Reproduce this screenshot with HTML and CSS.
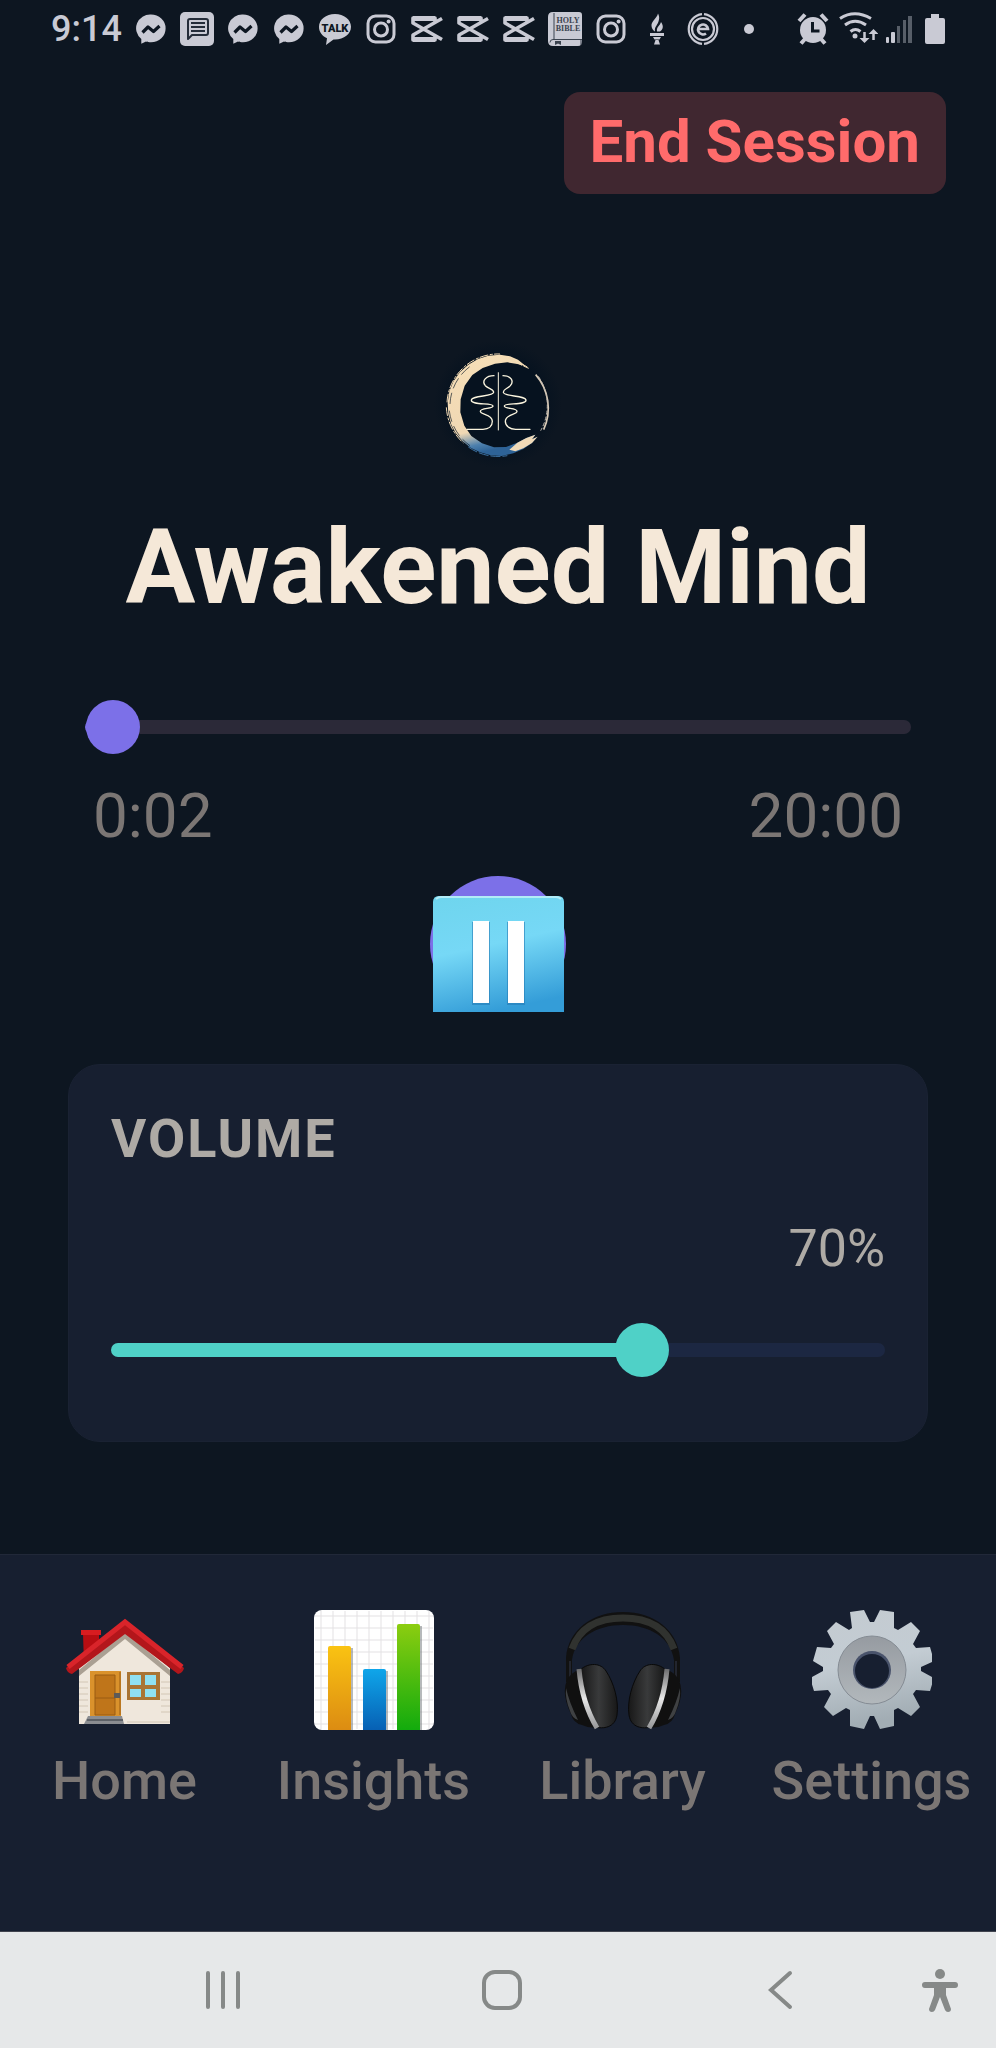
FILE: index.html
```html
<!DOCTYPE html>
<html lang="en">
  <head>
    <meta charset="UTF-8" />
    <meta name="viewport" content="width=device-width, initial-scale=1.0" />
    <title>Awakened Mind</title>
    <link rel="stylesheet" href="styles.css">
  </head>
  <body>
    <!-- shared icons -->
    <svg class="sprite" aria-hidden="true">
      <symbol id="messenger" viewBox="0 0 34 34">
        <path fill="currentColor" d="M17 2.500a14.500 13.800 0 0 1 0 27.800c-2 0-3.500-.2-5-.8L7.300 31.700V27A14 13.800 0 0 1 17 2.500z" />
        <path fill="none" stroke="#0d1621" stroke-width="3.200" stroke-linejoin="round" d="M8.500 20.500l5.500-5.500 5.500 4.500 6-5.500" />
      </symbol>
      <symbol id="instagram" viewBox="0 0 34 34">
        <rect x="4" y="4" width="26" height="26" rx="7.500" fill="none" stroke="currentColor" stroke-width="3" />
        <circle cx="17" cy="17.500" r="6.500" fill="none" stroke="currentColor" stroke-width="3" />
        <circle cx="24.600" cy="9.600" r="2" fill="currentColor" />
      </symbol>
      <symbol id="capcut" viewBox="0 0 34 34">
        <path fill="none" stroke="currentColor" stroke-width="3.600" stroke-linejoin="round" d="M25 9.500V6H3v5l29 16.500M25 24.500V28H3v-5L32 6.500" />
        <path fill="none" stroke="currentColor" stroke-width="5" d="M3 6.500h22M3 27.500h22" />
      </symbol>
    </svg>

    <div class="status-bar">
      <span class="status-time">9:14</span>
      <div class="status-icons">
        <svg class="status-icon"><use href="#messenger" /></svg>
        <svg class="status-icon" viewBox="0 0 34 34">
          <rect width="34" height="34" rx="5" fill="currentColor" />
          <path fill="none" stroke="#242c39" stroke-width="2" stroke-linejoin="round" d="M8 27V9q0-2 2-2h16q2 0 2 2v12q0 2-2 2H12z" />
          <path stroke="#242c39" stroke-width="2" d="M11 11h14M11 15h14M11 19h14" />
        </svg>
        <svg class="status-icon"><use href="#messenger" /></svg>
        <svg class="status-icon"><use href="#messenger" /></svg>
        <svg class="status-icon" viewBox="0 0 34 34">
          <path fill="currentColor" d="M17 2c9 0 16 5.500 16 12.800S26 27.500 17 27.500h-1.500L8 33l1-6.800C4 24 1 20 1 14.800 1 7.500 8 2 17 2z" />
          <text class="talk-text" x="17" y="19.500">TALK</text>
        </svg>
        <svg class="status-icon"><use href="#instagram" /></svg>
        <svg class="status-icon"><use href="#capcut" /></svg>
        <svg class="status-icon"><use href="#capcut" /></svg>
        <svg class="status-icon"><use href="#capcut" /></svg>
        <svg class="status-icon" viewBox="0 0 34 34">
          <path fill="currentColor" d="M5 0h26q3 0 3 3v26q0 5-4 5H5q-5 0-5-5V5q0-5 5-5z" />
          <path fill="none" stroke="#3b434f" stroke-width="1" d="M6 1v26M34 27.500H5q-3 0-3 3M33 28v5" />
          <path fill="#3b434f" d="M7 29h6v4l-3-1.500L7 33z" />
          <text class="bible-text" x="20" y="11">HOLY</text>
          <text class="bible-text" x="20" y="19">BIBLE</text>
        </svg>
        <svg class="status-icon"><use href="#instagram" /></svg>
        <svg class="status-icon" viewBox="0 0 34 34" fill="currentColor">
          <path d="M18 1.500c-1 5-7 7.500-6.500 12.500.3 3 2 4.500 3.500 5.500-1-5 3-6 4-12 .5-2 0-4-1-6z" />
          <path d="M21 10c-1 4-5 5-4 9.500h3c3-2 4-5.500 1-9.500zM10 21h14v3H10zM13 25h8l-1.500 2.500h-5zM15.500 28h3l1.500 4.500h-6z" />
        </svg>
        <svg class="status-icon" viewBox="0 0 34 34" fill="none" stroke="currentColor">
          <path stroke-width="2.200" d="M18 2.100a15 15 0 0 1 0 29.800M16 2.100a15 15 0 0 0 0 29.800" />
          <circle cx="17" cy="17" r="11" stroke-width="2.200" />
          <path stroke-width="2.600" d="M12 17h10a5 5 0 1 0-2 4.500" />
        </svg>
        <svg class="status-icon" viewBox="0 0 34 34"><circle cx="17" cy="17" r="5" fill="currentColor" /></svg>
      </div>
      <div class="status-system">
        <svg class="status-icon" viewBox="0 0 34 34">
          <circle cx="17" cy="18" r="13" fill="currentColor" />
          <path fill="none" stroke="currentColor" stroke-width="4" d="M3 9l6-6.500M31 9l-6-6.500M9 27l-4 4.500M25 27l4 4.500" />
          <path fill="none" stroke="#0d1621" stroke-width="3" d="M16.500 10v9h7" />
        </svg>
        <svg class="wifi-icon" viewBox="0 0 40 34" fill="none" stroke="currentColor">
          <path stroke-width="3" d="M2 6.500q14.500-9.500 31 0M7 13q10-7.500 21 0M12.500 19.500q5-4 10 0" />
          <circle cx="17" cy="24" r="2.500" fill="currentColor" stroke="none" />
          <path stroke-width="2.500" d="M26.500 20v9M35.500 28v-9" />
          <path fill="currentColor" stroke="none" d="M21.500 26h10l-5 5zM30.500 22h10l-5-5z" />
        </svg>
        <svg class="signal-icon" viewBox="0 0 27 34" fill="currentColor">
          <rect y="25" width="3" height="6" rx="1" />
          <rect x="5" y="20" width="4" height="11" rx="1" />
          <path opacity=".4" d="M11 14h3v17h-3zM17 8h3v23h-3zM22 4h4v27h-4z" />
        </svg>
        <svg class="battery-icon" viewBox="0 0 20 34" fill="currentColor">
          <path d="M6 2h8v4h4q2 0 2 2v22q0 2-2 2H2q-2 0-2-2V8q0-2 2-2h4z" />
        </svg>
      </div>
    </div>

    <header class="header">
      <button class="end-session" type="button">End Session</button>
    </header>

    <main class="session">
      <svg class="logo" viewBox="42 33 384 384" aria-hidden="true">
        <defs>
          <linearGradient id="ring" x1="0" y1="0" x2="0.200" y2="1">
            <stop offset="0" stop-color="#f7dfb7" />
            <stop offset="0.780" stop-color="#f0d8b4" />
            <stop offset="0.920" stop-color="#4d80ad" />
            <stop offset="1" stop-color="#2e6397" />
          </linearGradient>
          <radialGradient id="glow">
            <stop offset="0.700" stop-color="#06121f" />
            <stop offset="1" stop-color="#0d1621" />
          </radialGradient>
        </defs>
        <rect x="42" y="33" width="384" height="384" fill="url(#glow)" />
        <path fill="url(#ring)" d="M318 112L294 92 270 82 240 77 205 80 174 90 145 107 120 129 101 156 88 187 83 222 85 255 94 287 107 312 128 337 153 357 180 370 212 379 245 381 280 373 310 360 336 342 351 324 336 331 346 317 319 327 292 341 258 354 222 355 186 343 154 321 133 290 121 250 122 211 134 170 157 138 188 117 225 104 262 100 292 105z" />
        <path fill="#f0dab8" d="M268 362l24-21 27-14 27-10-10 14 17-8-17 19-26 16-24 9z" />
        <g fill="none" stroke-width="3">
          <path stroke="#f2dab4" stroke-dasharray="26 5 9 4" d="M81 220A154 154 0 0 1 240 75M79 235A156 156 0 0 0 130 342M264 84l58 30M270 92l56 26" />
          <path stroke="#3b70a0" stroke-dasharray="30 6" d="M145 354A155 155 0 0 0 262 380" />
          <path stroke="#0b1826" stroke-width="2" stroke-dasharray="34 14" d="M90 225A147 147 0 0 1 155 109M88 245A148 148 0 0 0 150 350" />
          <path stroke="#d9cbb8" stroke-width="5" d="M347 137A154 154 0 0 1 371 302" />
          <path stroke="#c0b9b0" stroke-dasharray="12 6" d="M355 142A154 154 0 0 1 362 305" />
        </g>
        <g fill="none" stroke="#fbf5df" stroke-width="4" stroke-linecap="round">
          <path d="M235 131v172" stroke-width="3" />
          <path d="M222 140c-24 0-38 16-26 30 10 10 25 10 25 20 0 14-67 8-67 24s65 6 65 17c0 10-38 4-38 16 0 11 36 8 36 30 0 14-10 24-28 24h-48" />
          <path d="M249 140c24 0 34 16 22 30-9 10-21 10-21 20 0 14 68 8 68 24s-65 6-65 17c0 10 38 4 38 16 0 11-35 8-35 30 0 14 13 24 31 24h43" />
        </g>
      </svg>

      <h1 class="title">Awakened Mind</h1>

      <div class="progress">
        <input class="slider slider-progress" type="range" min="0" max="1200" value="2" aria-label="Session progress" style="--fill: 1%">
        <div class="times">
          <span>0:02</span>
          <span>20:00</span>
        </div>
      </div>

      <button class="pause" type="button" aria-label="Pause">
        <svg class="pause-icon" viewBox="0 0 131 116">
          <defs>
            <linearGradient id="tile" x1="0.200" y1="0" x2="0.450" y2="1">
              <stop offset="0" stop-color="#6fd5ee" />
              <stop offset="0.450" stop-color="#76d8f6" />
              <stop offset="1" stop-color="#349dd8" />
            </linearGradient>
          </defs>
          <path fill="url(#tile)" d="M0 116V6q0-6 6-6h119q6 0 6 6v110z" />
          <path fill="none" stroke="#b2ecf7" stroke-width="2" d="M3 3q2-2 5-2h115q3 0 5 2" />
          <path fill="#237bb5" opacity=".6" d="M39 26h18v83H39zM74 26h18v83H74z" />
          <path fill="#fff" d="M40 25h16v82H40zM75 25h16v82H75z" />
        </svg>
      </button>

      <section class="volume">
        <label class="volume-label" for="volume">VOLUME</label>
        <output class="volume-value" for="volume">70%</output>
        <input class="slider slider-volume" id="volume" type="range" min="0" max="100" value="70" style="--fill: 70%">
      </section>
    </main>

    <nav class="tabs">
      <a class="tab" href="#home">
        <svg class="tab-icon" viewBox="0 0 120 120">
          <path fill="#b80d12" d="M18 24h16v16L19 54z" />
          <path fill="#d81c20" d="M16 20h20v5H16z" />
          <path fill="#efe7dc" d="M14 114V58l46-38 45 38v56z" />
          <path fill="#8d8274" opacity=".7" d="M60 22l45 38v6L60 29 14 66v-6z" />
          <path stroke="#d2c6b5" d="M14 72h9M14 78h9M14 84h9M14 90h9M14 96h9M14 102h9M96 72h9M96 78h9M96 84h9M96 90h9M96 96h9M96 102h9M62 112h43" />
          <path fill="#b3161b" d="M60 10l59 48q-1 5-6 6L60 24 7 64q-5-1-6-6z" />
          <path fill="none" stroke="#d9242a" stroke-width="5" d="M3 57l57-45 57 45" />
          <path fill="#da922c" d="M25 61h31v46H25z" />
          <path fill="#bf751a" stroke="#9a5c12" d="M30 65h20v40H30z" />
          <path stroke="#9a5c12" d="M30 88h20M55 62v43" />
          <path fill="#5d5a58" d="M49 83h6v5h-6z" />
          <path fill="#8b8d91" d="M23 106h34l2 8H19z" />
          <path stroke="#5d6167" stroke-width="2" d="M22 110h36" />
          <path fill="#a97434" d="M62 62h33v28H62z" />
          <path fill="#8fe0f2" d="M65 65h11v10H65zM80 65h11v10H80zM65 79h11v8H65zM80 79h11v8H80z" />
        </svg>
        Home
      </a>
      <a class="tab" href="#insights">
        <svg class="tab-icon" viewBox="0 0 120 120">
          <defs>
            <linearGradient id="yellow" x2="0" y2="1"><stop stop-color="#fac312" /><stop offset="1" stop-color="#dc8c12" /></linearGradient>
            <linearGradient id="blue" x2="0" y2="1"><stop stop-color="#0fa6ea" /><stop offset="1" stop-color="#0760b4" /></linearGradient>
            <linearGradient id="green" x2="0" y2="1"><stop stop-color="#8ccd10" /><stop offset="1" stop-color="#12ab0d" /></linearGradient>
          </defs>
          <rect width="120" height="120" rx="8" fill="#fff" />
          <path stroke="#e3e1e3" d="M7 1v118M19 1v118M31 1v118M43 1v118M55 1v118M67 1v118M79 1v118M91 1v118M103 1v118M115 1v118M1 6h118M1 18h118M1 30h118M1 42h118M1 54h118M1 66h118M1 78h118M1 90h118M1 102h118M1 114h118" />
          <path fill="#6d7477" opacity=".5" d="M36 38h3v82h-3zM71 61h3v59h-3zM105 16h3v104h-3z" />
          <path fill="url(#yellow)" d="M14 120V38q0-2 2-2h19q2 0 2 2v82z" />
          <path fill="url(#blue)" d="M49 120V61q0-2 2-2h19q2 0 2 2v59z" />
          <path fill="url(#green)" d="M83 120V16q0-2 2-2h19q2 0 2 2v104z" />
        </svg>
        Insights
      </a>
      <a class="tab" href="#library">
        <svg class="tab-icon" viewBox="0 0 120 120">
          <defs>
            <linearGradient id="pad"><stop stop-color="#151515" /><stop offset="0.500" stop-color="#393a3b" /><stop offset="1" stop-color="#181818" /></linearGradient>
            <linearGradient id="silver" x2="0" y2="1"><stop stop-color="#6d6d6e" /><stop offset="0.500" stop-color="#e8e8e8" /><stop offset="1" stop-color="#97989a" /></linearGradient>
            <g id="cup">
              <path fill="#101010" d="M4 70c6-10 14-12 22-8l17 54q-14 4-24-1-9-2-11-11Q-2 84 4 70z" />
              <path fill="#3f4143" d="M3 78q3 14 12 32-6-2-8-9-5-12-4-23z" />
              <path fill="url(#pad)" stroke="#090909" d="M17 60c9-8 21-7 26 1 8 12 13 30 11 44-2 13-14 14-22 12-6-17-12-38-15-57z" />
              <path fill="none" stroke="url(#silver)" stroke-width="5" d="M16 59q3 34 18 59" />
            </g>
          </defs>
          <path fill="#111" d="M3 72V48C5 20 29 2 60 2s55 18 57 46v24h-6V50C108 28 87 15 60 15S12 28 9 50v22z" />
          <path fill="none" stroke="#30322f" stroke-width="7" d="M9 39C17 17 36 8 60 8s43 9 51 31" />
          <path stroke="#353b4c" d="M7 51v19M113 51v19" />
          <use href="#cup" />
          <use href="#cup" transform="matrix(-1 0 0 1 120 0)" />
        </svg>
        Library
      </a>
      <a class="tab" href="#settings">
        <svg class="tab-icon" viewBox="0 0 120 120">
          <defs>
            <linearGradient id="steel" x2="0.200" y2="1"><stop stop-color="#c4cbd1" /><stop offset="0.500" stop-color="#c3ccd3" /><stop offset="1" stop-color="#a2adb4" /></linearGradient>
            <linearGradient id="hub" x2="0" y2="1"><stop stop-color="#969ba1" /><stop offset="1" stop-color="#b2b8bc" /></linearGradient>
          </defs>
          <path fill="url(#steel)" d="M38 2l14-2 6 12h4l6-12 14 2 0 16 4 2 13-8 9 9-7 13 3 4 14-1 4 14-13 6v4l13 7-4 13-14-1-3 4 7 13-9 9-13-8-4 2 0 16-14 3-6-13h-4l-6 13-14-3 0-16-4-2-13 8-9-9 7-13-3-4-14 1-4-13 13-7v-4L1 51l4-14 14 1 3-4-7-13 9-9 13 8 3-2z" />
          <circle cx="60" cy="60" r="34" fill="url(#hub)" stroke="#858c94" />
          <circle cx="60" cy="60" r="19" fill="#49536b" />
          <circle cx="60" cy="61" r="17" fill="#171f30" />
        </svg>
        Settings
      </a>
    </nav>

    <div class="system-nav">
      <button class="system-button" type="button" aria-label="Recent apps">
        <svg class="system-icon" viewBox="0 0 44 44"><path d="M7 5v34M22 5v34M37 5v34" /></svg>
      </button>
      <button class="system-button" type="button" aria-label="Home">
        <svg class="system-icon" viewBox="0 0 44 44"><rect x="4" y="4" width="36" height="36" rx="11" /></svg>
      </button>
      <button class="system-button" type="button" aria-label="Back">
        <svg class="system-icon" viewBox="0 0 44 44"><path d="M31 5L12 22l19 17" /></svg>
      </button>
      <button class="system-button" type="button" aria-label="Accessibility">
        <svg class="system-icon" viewBox="0 0 44 44">
          <circle class="solid" cx="22" cy="6" r="5" />
          <path class="solid" d="M7 14h30q3 0 3 3t-3 3h-9v7l5 14q0 3-3 3-2 0-3-2l-5-13-5 13q-1 2-3 2-3 0-3-3l5-14v-7H7q-3 0-3-3t3-3z" />
        </svg>
      </button>
    </div>
  </body>
</html>
```

FILE: styles.css
```css
* {
  box-sizing: border-box;
}

body {
  margin: 0;
  min-height: 100vh;
  display: flex;
  flex-direction: column;
  background-color: #0d1621;
  font-family: Roboto, "Liberation Sans", sans-serif;
}

button {
  border: 0;
  padding: 0;
  font-family: inherit;
}

.sprite {
  display: none;
}

/* status bar */
.status-bar {
  display: flex;
  align-items: center;
  gap: 12px;
  height: 58px;
  padding: 0 51px;
  color: #c9cad4;
}

.status-time {
  font-size: 36px;
  font-weight: 500;
}

.status-icons {
  display: flex;
  gap: 12px;
}

.status-icon {
  width: 34px;
  height: 34px;
}

.status-system {
  display: flex;
  gap: 8px;
  margin-left: auto;
}

.wifi-icon {
  width: 40px;
  height: 34px;
}

.signal-icon {
  width: 27px;
  height: 34px;
}

.battery-icon {
  width: 20px;
  height: 34px;
  margin-left: 4px;
}

.talk-text {
  font-size: 11px;
  font-weight: 900;
  text-anchor: middle;
  fill: #0d1621;
}

.bible-text {
  font-family: "Liberation Serif", serif;
  font-size: 8px;
  font-weight: 700;
  text-anchor: middle;
  fill: #3b434f;
}

/* header */
.header {
  display: flex;
  justify-content: flex-end;
  padding: 34px 50px 0;
}

.end-session {
  padding: 14px 26px 16px;
  border-radius: 16px;
  background-color: #402730;
  color: #ff6b6b;
  font-size: 60px;
  font-weight: 700;
  line-height: 72px;
}

/* session */
.session {
  flex: 1;
  display: flex;
  flex-direction: column;
  align-items: center;
  padding: 146px 68px 112px;
}

.logo {
  width: 128px;
  height: 128px;
}

.title {
  margin: 36px 0 68px;
  color: #f5e8d8;
  font-size: 104px;
  font-weight: 700;
  line-height: 128px;
}

.progress {
  width: 100%;
  padding: 0 17px;
}

.times {
  display: flex;
  justify-content: space-between;
  padding: 0 8px;
  margin-top: 24px;
  color: #7b7674;
  font-size: 62px;
  line-height: 76px;
}

.slider {
  -webkit-appearance: none;
  appearance: none;
  display: block;
  width: 100%;
  height: 54px;
  margin: 0;
  background: none;
}

.slider::-webkit-slider-runnable-track {
  height: 14px;
  border-radius: 7px;
  background: linear-gradient(to right, var(--accent) var(--fill), var(--track) var(--fill));
}

.slider::-webkit-slider-thumb {
  -webkit-appearance: none;
  width: 54px;
  height: 54px;
  margin-top: -20px;
  border-radius: 50%;
  background-color: var(--accent);
}

.slider-progress {
  --accent: #7c70e8;
  --track: #2b2938;
}

.slider-volume {
  --accent: #4fd1c7;
  --track: #1c2742;
  margin-top: 42px;
}

.pause {
  display: flex;
  justify-content: center;
  align-items: flex-end;
  width: 136px;
  height: 136px;
  margin-top: 22px;
  border-radius: 50%;
  background-color: #7c70e8;
}

.pause-icon {
  width: 131px;
  height: 116px;
}

.volume {
  display: flex;
  flex-direction: column;
  width: 100%;
  margin-top: 52px;
  padding: 42px 42px 64px;
  border: 1px solid #1a2233;
  border-radius: 32px;
  background-color: #171f30;
  color: #aeaaa5;
  font-size: 54px;
  line-height: 64px;
}

.volume-label {
  font-weight: 700;
  letter-spacing: 2px;
}

.volume-value {
  margin-top: 46px;
  font-size: 52px;
  text-align: right;
}

/* bottom tabs */
.tabs {
  display: grid;
  grid-template-columns: repeat(4, 1fr);
  padding: 55px 0 116px;
  border-top: 1px solid #212838;
  background-color: #171f30;
}

.tab {
  display: flex;
  flex-direction: column;
  align-items: center;
  gap: 17px;
  color: #7b7674;
  font-size: 54px;
  font-weight: 500;
  line-height: 68px;
  text-decoration: none;
}

.tab-icon {
  width: 120px;
  height: 120px;
}

/* system navigation */
.system-nav {
  display: grid;
  grid-template-columns: repeat(3, 1fr) 40px;
  height: 117px;
  padding: 0 36px 0 84px;
  border-top: 1px solid #40434e;
  background-color: #e6e8e9;
}

.system-button {
  display: flex;
  justify-content: center;
  align-items: center;
  background: none;
}

.system-icon {
  flex: none;
  width: 44px;
  height: 44px;
  fill: none;
  stroke: #868988;
  stroke-width: 4;
  stroke-linecap: round;
}

.system-icon .solid {
  fill: #868988;
  stroke: none;
}
```
